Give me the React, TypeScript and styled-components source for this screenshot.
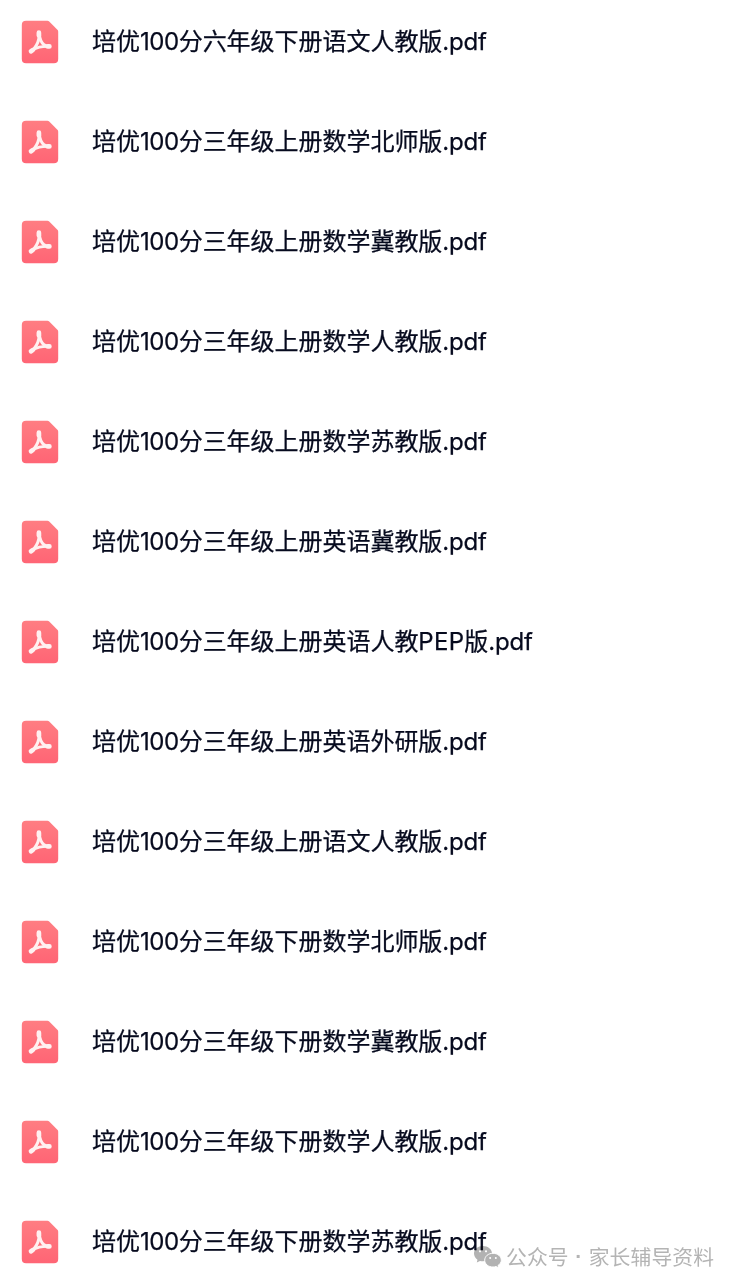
import React from 'react';
import styled, { createGlobalStyle } from 'styled-components';

const GlobalStyle = createGlobalStyle`
  body {
    margin: 0;
    background: #fff;
  }
`;

const Page = styled.main`
  position: relative;
  width: 738px;
  height: 1288px;
  overflow: hidden;
  background: #fff;
  font-family: Inter, 'Noto Sans CJK SC', sans-serif;
`;

const FileList = styled.ul`
  margin: 0;
  padding: 0;
  list-style: none;
`;

const FileRow = styled.li`
  display: flex;
  align-items: center;
  gap: 33px;
  height: 84px;
  padding: 0 21px;
  margin-bottom: 16px;
`;

const FileIcon = styled.svg`
  flex: none;
  width: 38px;
  height: 44px;
`;

const FileName = styled.span`
  color: #060a1e;
  font-size: 24px;
  line-height: 36px;
  white-space: nowrap;
  -webkit-text-stroke: 0.25px #060a1e;
`;

const Run = styled.span<{ $tracking: number }>`
  letter-spacing: ${({ $tracking }) => $tracking}px;
`;

const Watermark = styled.div`
  position: absolute;
  left: 473px;
  top: 1241px;
  display: flex;
  align-items: center;
  gap: 4px;
  height: 32px;
  mix-blend-mode: multiply;
`;

const WatermarkText = styled.span`
  display: flex;
  margin-top: -2px;
  color: #b4b4b4;
  font-family: 'Noto Sans CJK SC', sans-serif;
  font-size: 20.8px;
  letter-spacing: 0.1px;
  line-height: 32px;
  white-space: nowrap;
`;

const Separator = styled.span`
  width: 20px;
  text-align: center;
  font-family: 'Liberation Sans', sans-serif;
  font-weight: 700;
`;

const files = [
  '培优100分六年级下册语文人教版.pdf',
  '培优100分三年级上册数学北师版.pdf',
  '培优100分三年级上册数学冀教版.pdf',
  '培优100分三年级上册数学人教版.pdf',
  '培优100分三年级上册数学苏教版.pdf',
  '培优100分三年级上册英语冀教版.pdf',
  '培优100分三年级上册英语人教PEP版.pdf',
  '培优100分三年级上册英语外研版.pdf',
  '培优100分三年级上册语文人教版.pdf',
  '培优100分三年级下册数学北师版.pdf',
  '培优100分三年级下册数学冀教版.pdf',
  '培优100分三年级下册数学人教版.pdf',
  '培优100分三年级下册数学苏教版.pdf',
];

const trackingOf = (run: string) => {
  if (/^\d/.test(run)) return -0.45;
  if (/^[A-Z]/.test(run)) return 0.3;
  if (/^\./.test(run)) return -0.2;
  return -0.03;
};

const PdfIcon = () => (
  <FileIcon viewBox="0 0 38 44" aria-hidden="true">
    <defs>
      <linearGradient id="pdf-fill" x1="0" y1="0" x2="0" y2="1">
        <stop offset="0" stopColor="#ff7d82" />
        <stop offset="1" stopColor="#ff6575" />
      </linearGradient>
    </defs>
    <path
      d="M5 .8H26.5Q27.500 .8 28.200 1.500L36.400 9.700Q37.200 10.500 37.200 11.500V39Q37.200 43.300 33 43.300H5Q.8 43.300 .8 39V5Q.8 .8 5 .8Z"
      fill="url(#pdf-fill)"
    />
    <g fill="none" stroke="#fff1f1" strokeLinecap="round" strokeLinejoin="round">
      <path d="M18 13.500C18.500 18 17.600 21.500 15.400 25.300C14 27.800 12.300 30 10.300 31.300" strokeWidth="3.100" />
      <path d="M18.300 13.500C18.600 18.500 20.500 22.700 23 24.900C24.600 26 26.500 26.500 28.500 26.500" strokeWidth="3.100" />
      <path d="M10.500 31C14 27.600 22 25.800 28.500 26.400" strokeWidth="2.800" />
      <path d="M17.900 12.700V15.500M10 31.200L12 29.900M26.700 26.400H28.400" strokeWidth="4.700" />
    </g>
  </FileIcon>
);

const WechatIcon = () => (
  <svg width="29" height="24" viewBox="0 0 29 24" aria-hidden="true">
    <path
      d="M10 1C4.800 1 1 4.400 1 8.600C1 11.200 2.400 13.300 4.500 14.700L3.800 17.500L7 15.900Q8.500 16.300 10 16.300C15 16.300 19 13 19 8.600S15 1 10 1Z"
      fill="#b2b2b2"
    />
    <path
      d="M20 8.300C15.300 8.300 11.700 11.300 11.700 15.200S15.300 22 20 22Q21.600 22 23 21.500L25.700 23L25 20.500C27 19.200 28.300 17.400 28.300 15.200C28.300 11.300 24.600 8.300 20 8.300Z"
      fill="#b2b2b2"
      stroke="#fff"
      strokeWidth="1"
    />
    <g fill="#fff">
      <circle cx="7" cy="6.300" r="1.100" />
      <circle cx="13" cy="6.300" r="1.100" />
      <circle cx="17.200" cy="13" r="1" />
      <circle cx="22.800" cy="13" r="1" />
    </g>
  </svg>
);

export default function App() {
  return (
    <Page>
      <GlobalStyle />
      <FileList>
        {files.map((name) => (
          <FileRow key={name}>
            <PdfIcon />
            <FileName>
              {name.split(/(\d+|[A-Z]+|\.pdf)/).filter(Boolean).map((run) => (
                <Run key={run} $tracking={trackingOf(run)}>
                  {run}
                </Run>
              ))}
            </FileName>
          </FileRow>
        ))}
      </FileList>
      <Watermark>
        <WechatIcon />
        <WatermarkText>
          公众号<Separator>·</Separator>家长辅导资料
        </WatermarkText>
      </Watermark>
    </Page>
  );
}
